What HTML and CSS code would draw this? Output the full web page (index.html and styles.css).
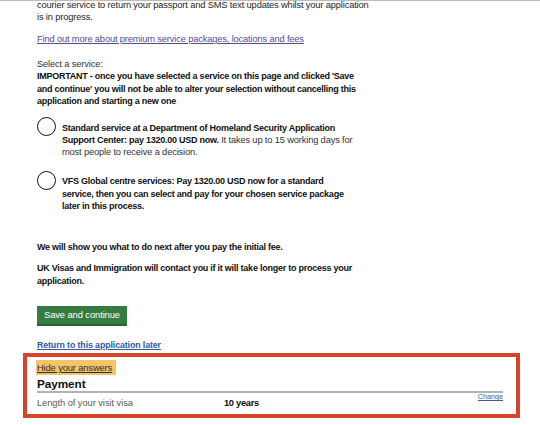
FILE: index.html
```html
<!DOCTYPE html>
<html lang="en">
<head>
<meta charset="utf-8">
<title>Choose a service</title>
<link rel="stylesheet" href="styles.css">
</head>
<body>
<div class="edge"></div>
<main class="page">
  <p class="intro">courier service to return your passport and SMS text updates whilst your application<br>is in progress.</p>
  <p class="more"><a class="link-visited" href="#">Find out more about premium service packages, locations and fees</a></p>
  <p class="select">Select a service:<br><strong>IMPORTANT - once you have selected a service on this page and clicked 'Save<br>and continue' you will not be able to alter your selection without cancelling this<br>application and starting a new one</strong></p>

  <div class="radios">
    <label class="radio">
      <span class="radio-circle"></span>
      <span class="radio-label"><strong>Standard service at a Department of Homeland Security Application<br>Support Center: pay 1320.00 USD now.</strong> It takes up to 15 working days for<br>most people to receive a decision.</span>
    </label>
    <label class="radio">
      <span class="radio-circle"></span>
      <span class="radio-label"><strong>VFS Global centre services: Pay 1320.00 USD now for a standard<br>service, then you can select and pay for your chosen service package<br>later in this process.</strong></span>
    </label>
  </div>

  <p class="next"><strong>We will show you what to do next after you pay the initial fee.</strong></p>
  <p class="contact"><strong>UK Visas and Immigration will contact you if it will take longer to process your<br>application.</strong></p>

  <button class="button" type="button">Save and continue</button>
  <p class="return"><a href="#">Return to this application later</a></p>

  <section class="summary">
    <a class="hide-link" href="#">Hide your answers</a>
    <h2 class="summary-title">Payment</h2>
    <div class="summary-row">
      <span class="summary-key">Length of your visit visa</span>
      <span class="summary-value">10 years</span>
      <a class="summary-action" href="#">Change</a>
    </div>
  </section>
</main>
</body>
</html>
```

FILE: styles.css
```css
html, body {
  margin: 0;
  padding: 0;
  background: #ffffff;
}

body {
  font-family: "Liberation Sans", Arial, sans-serif;
  font-size: 9.3px;
  line-height: 12.5px;
  letter-spacing: -0.15px;
  color: #262626;
  white-space: nowrap;
}

/* thin divider along the top of the viewport */
.edge {
  position: fixed;
  top: 0;
  left: 0;
  right: 0;
  height: 1px;
  background: #bcbcbc;
}

.page {
  padding-left: 37px;
}

p {
  margin: 0;
}

strong {
  font-size: 9px;
  font-weight: 700;
  color: #111111;
  letter-spacing: -0.25px;
}

a {
  color: #2c5b9c;
}

.intro {
  margin-top: -1.25px;
  margin-bottom: 9.5px;
}

.more {
  margin-bottom: 11.9px;
}

.link-visited {
  color: #574b8e;
}

.select {
  color: #333333;
  margin-bottom: 9.7px;
}

/* radio list */
.radios {
  display: flex;
  flex-direction: column;
  gap: 12px;
  margin-bottom: 28.4px;
}

.radio {
  display: flex;
  align-items: flex-start;
  gap: 6px;
}

.radio-circle {
  flex: none;
  width: 19px;
  height: 19px;
  box-sizing: border-box;
  border: 1.6px solid #111111;
  border-radius: 50%;
  background: #ffffff;
}

.radio-label {
  padding-top: 4.5px;
  line-height: 12.3px;
  color: #333333;
}

.next {
  margin-bottom: 9px;
}

.contact {
  margin-bottom: 19px;
}

/* primary action */
.button {
  display: block;
  height: 20px;
  box-sizing: border-box;
  margin: 0 0 12.75px;
  padding: 0 7px 2px;
  border: 0;
  background: #367b42;
  box-shadow: inset 0 -2px 0 #2a6334;
  color: #ffffff;
  font-family: inherit;
  font-size: 9.4px;
  letter-spacing: -0.1px;
  line-height: 18px;
  cursor: pointer;
}

.return {
  margin-bottom: 1.25px;
}

.return a {
  font-weight: 700;
  font-size: 8.8px;
  letter-spacing: -0.1px;
}

/* answers summary */
.summary {
  margin-left: -14px;
  width: 497px;
  box-sizing: border-box;
  border: 4px solid #d6452a;
  padding: 3.5px 13px 4.5px 10px;
}

.hide-link {
  display: inline-block;
  margin-left: -1px;
  padding: 0 4px 0 1px;
  height: 15px;
  line-height: 15px;
  font-size: 9.4px;
  color: #2e2e2e;
  background: #f3c46a;
}

.summary-title {
  margin: 2px 0 0;
  font-size: 11.8px;
  line-height: 14px;
  font-weight: 700;
  color: #111111;
  letter-spacing: -0.1px;
  border-bottom: 2px solid #b1b4b6;
}

.summary-row {
  display: grid;
  grid-template-columns: 187px 1fr auto;
  align-items: start;
}

.summary-key,
.summary-value {
  padding-top: 3.5px;
  font-size: 9.3px;
  line-height: 12.5px;
}

.summary-key {
  color: #5a5a5a;
  letter-spacing: -0.05px;
}

.summary-value {
  font-weight: 700;
  color: #111111;
  letter-spacing: -0.3px;
}

.summary-action {
  font-size: 7.2px;
  line-height: 8px;
  letter-spacing: 0;
  color: #4b5897;
}
```
